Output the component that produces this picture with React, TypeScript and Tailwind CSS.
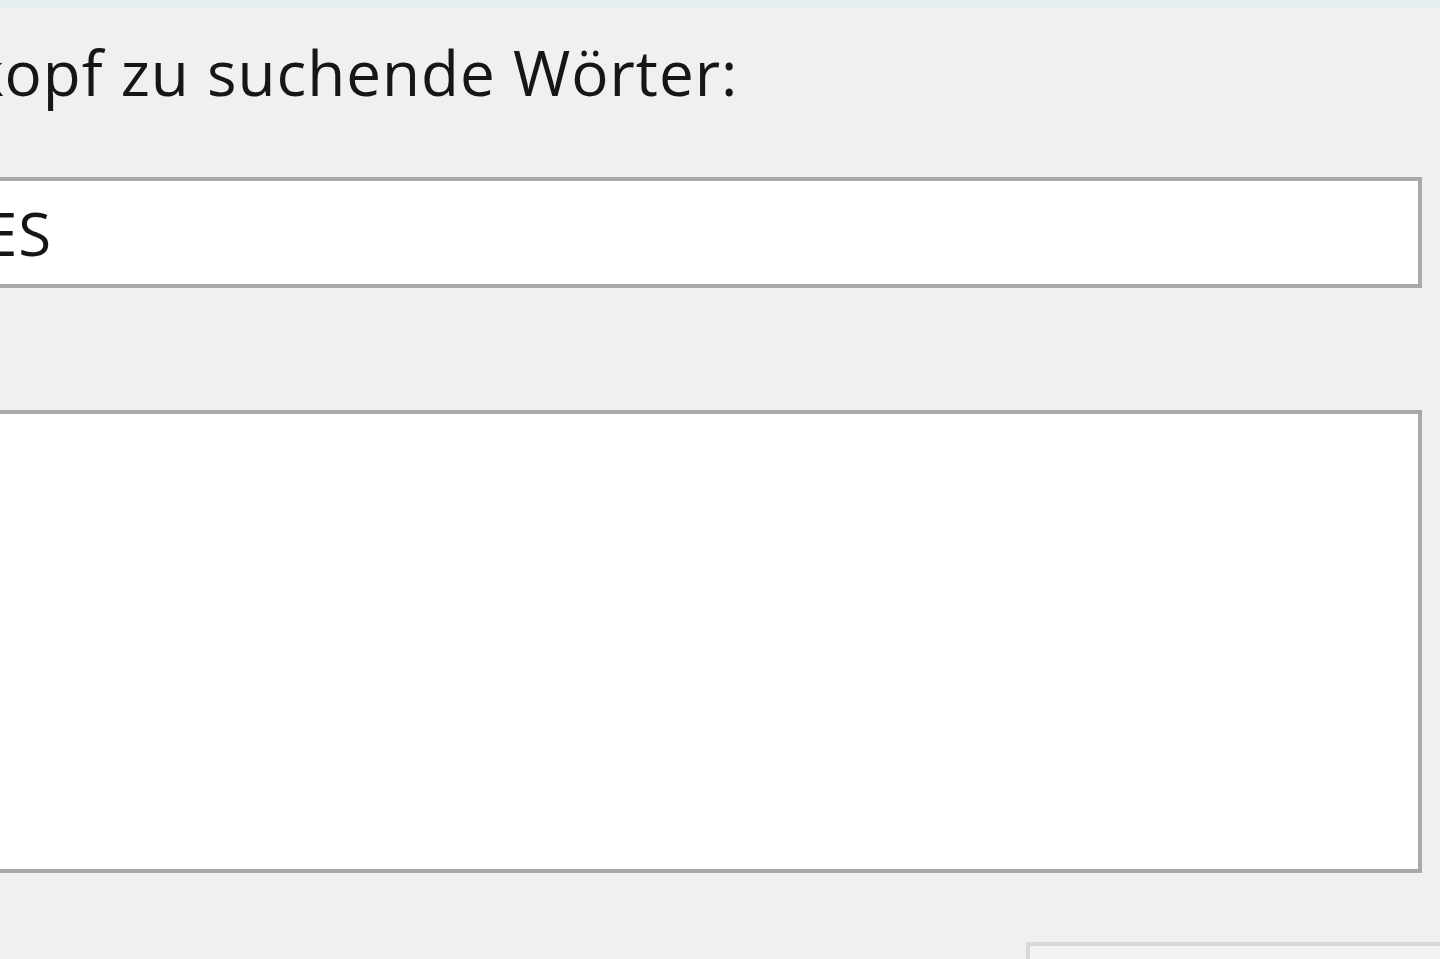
import React from "react";

export default function App() {
  const font = { fontFamily: '"Open Sans", "Noto Sans", "Liberation Sans", sans-serif' };
  return (
    <div className="w-[1440px] h-[959px] bg-[#f0f0f0] overflow-hidden flex flex-col" style={font}>
      <div className="h-[7px] w-full bg-[#e4eff1] shrink-0" />
      <div className="ml-[-40px] w-[1462px] flex flex-col shrink-0">
        <div className="mt-[34px] h-[62px] text-[62px] leading-none tracking-[1px] text-[#161616] whitespace-nowrap pl-[11px]">
          kopf zu suchende Wörter:
        </div>
        <div className="mt-[74px] h-[111px] border-[4px] border-[#a9a9a9] bg-white flex items-center">
          <span className="text-[60px] leading-none tracking-[1px] text-[#161616] pl-[20px]">ES</span>
        </div>
        <div className="mt-[122px] h-[463px] border-[4px] border-[#a9a9a9] bg-white" />
        <div className="mt-[69px] flex">
          <button className="ml-[1066px] w-[500px] h-[60px] border-[4px] border-[#d8d8d8] bg-[#f3f3f3] shrink-0" />
        </div>
      </div>
    </div>
  );
}
